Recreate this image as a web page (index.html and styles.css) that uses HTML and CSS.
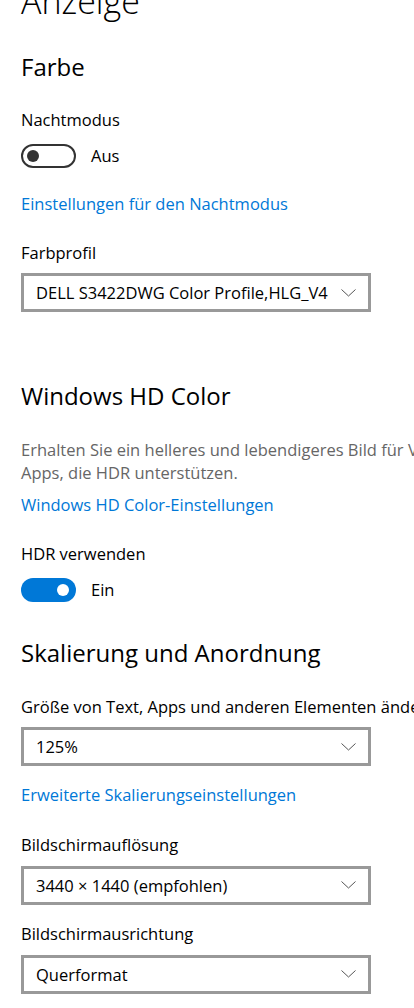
FILE: index.html
```html
<!DOCTYPE html>
<html lang="de">
<head>
<meta charset="utf-8">
<title>Anzeige</title>
<link rel="stylesheet" href="styles.css">
</head>
<body>
<main class="page">
  <h1 class="title">Anzeige</h1>

  <h2 class="section section-first">Farbe</h2>
  <div class="label label-night">Nachtmodus</div>
  <div class="toggle-row">
    <span class="toggle toggle-off"><span class="knob"></span></span>
    <span class="toggle-text">Aus</span>
  </div>
  <a class="link link-night" href="#">Einstellungen für den Nachtmodus</a>
  <div class="label label-gap">Farbprofil</div>
  <div class="select"><span class="select-text">DELL S3422DWG Color Profile,HLG_V4</span><svg class="chev" width="15" height="8" viewBox="0 0 15 8"><polyline points="0.5,0.5 7.5,7 14.5,0.5" fill="none" stroke="#555" stroke-width="1"/></svg></div>

  <h2 class="section section-hd">Windows HD Color</h2>
  <p class="desc">Erhalten Sie ein helleres und lebendigeres Bild für Videos und<br>Apps, die HDR unterstützen.</p>
  <a class="link link-hd" href="#">Windows HD Color-Einstellungen</a>
  <div class="label label-gap">HDR verwenden</div>
  <div class="toggle-row">
    <span class="toggle toggle-on"><span class="knob"></span></span>
    <span class="toggle-text">Ein</span>
  </div>

  <h2 class="section section-scale">Skalierung und Anordnung</h2>
  <div class="label label-size">Größe von Text, Apps und anderen Elementen ändern</div>
  <div class="select"><span class="select-text">125%</span><svg class="chev" width="15" height="8" viewBox="0 0 15 8"><polyline points="0.5,0.5 7.5,7 14.5,0.5" fill="none" stroke="#555" stroke-width="1"/></svg></div>
  <a class="link link-scale" href="#">Erweiterte Skalierungseinstellungen</a>
  <div class="label label-res">Bildschirmauflösung</div>
  <div class="select"><span class="select-text">3440 × 1440 (empfohlen)</span><svg class="chev" width="15" height="8" viewBox="0 0 15 8"><polyline points="0.5,0.5 7.5,7 14.5,0.5" fill="none" stroke="#555" stroke-width="1"/></svg></div>
  <div class="label label-orient">Bildschirmausrichtung</div>
  <div class="select"><span class="select-text">Querformat</span><svg class="chev" width="15" height="8" viewBox="0 0 15 8"><polyline points="0.5,0.5 7.5,7 14.5,0.5" fill="none" stroke="#555" stroke-width="1"/></svg></div>
</main>
</body>
</html>
```
FILE: styles.css
```css
html, body {
  margin: 0;
  padding: 0;
  background: #ffffff;
  overflow: hidden;
}
body {
  font-family: "Open Sans", "Noto Sans", sans-serif;
  color: #000;
}
.page {
  padding-left: 21px;
  display: flex;
  flex-direction: column;
  align-items: flex-start;
  white-space: nowrap;
}
.title {
  margin: -16px 0 0 0;
  font-size: 34px;
  line-height: 34px;
  font-weight: 300;
}
.section {
  margin: 0;
  font-size: 24px;
  line-height: 32px;
  font-weight: 400;
}
.section-first { margin-top: 32.5px; }
.section-hd { margin-top: 68px; }
.section-scale { margin-top: 35px; }
.label {
  font-size: 16.5px;
  line-height: 22px;
}
.label-night { margin-top: 26px; }
.label-gap { margin-top: 27px; }
.label-size { margin-top: 26.5px; }
.label-res { margin-top: 28.5px; }
.label-orient { margin-top: 18.5px; }
.toggle-row {
  margin-top: 13.5px;
  display: flex;
  align-items: center;
  gap: 15px;
  height: 24px;
}
.toggle {
  box-sizing: border-box;
  width: 55px;
  height: 24px;
  border-radius: 12px;
  display: flex;
  align-items: center;
}
.toggle-off {
  border: 2px solid #333;
  padding-left: 4px;
}
.toggle-off .knob { background: #333; }
.toggle-on {
  background: #0078d7;
  justify-content: flex-end;
  padding-right: 7px;
}
.toggle-on .knob { background: #fff; }
.knob {
  width: 12px;
  height: 12px;
  border-radius: 50%;
}
.toggle-text {
  font-size: 16.5px;
  line-height: 22px;
}
.link {
  font-size: 16.5px;
  line-height: 22px;
  color: #0078d7;
  text-decoration: none;
}
.link-night { margin-top: 24.5px; }
.link-hd { margin-top: 10px; }
.link-scale { margin-top: 17.5px; }
.desc {
  margin: 25.5px 0 0 0;
  font-size: 16.5px;
  line-height: 23px;
  color: #666;
}
.select {
  box-sizing: border-box;
  margin-top: 9.5px;
  width: 350px;
  height: 39px;
  border: 3px solid #999;
  display: flex;
  align-items: center;
  justify-content: space-between;
  padding: 0 12px 0 12px;
  font-size: 16.5px;
}
.chev { display: block; }
```
